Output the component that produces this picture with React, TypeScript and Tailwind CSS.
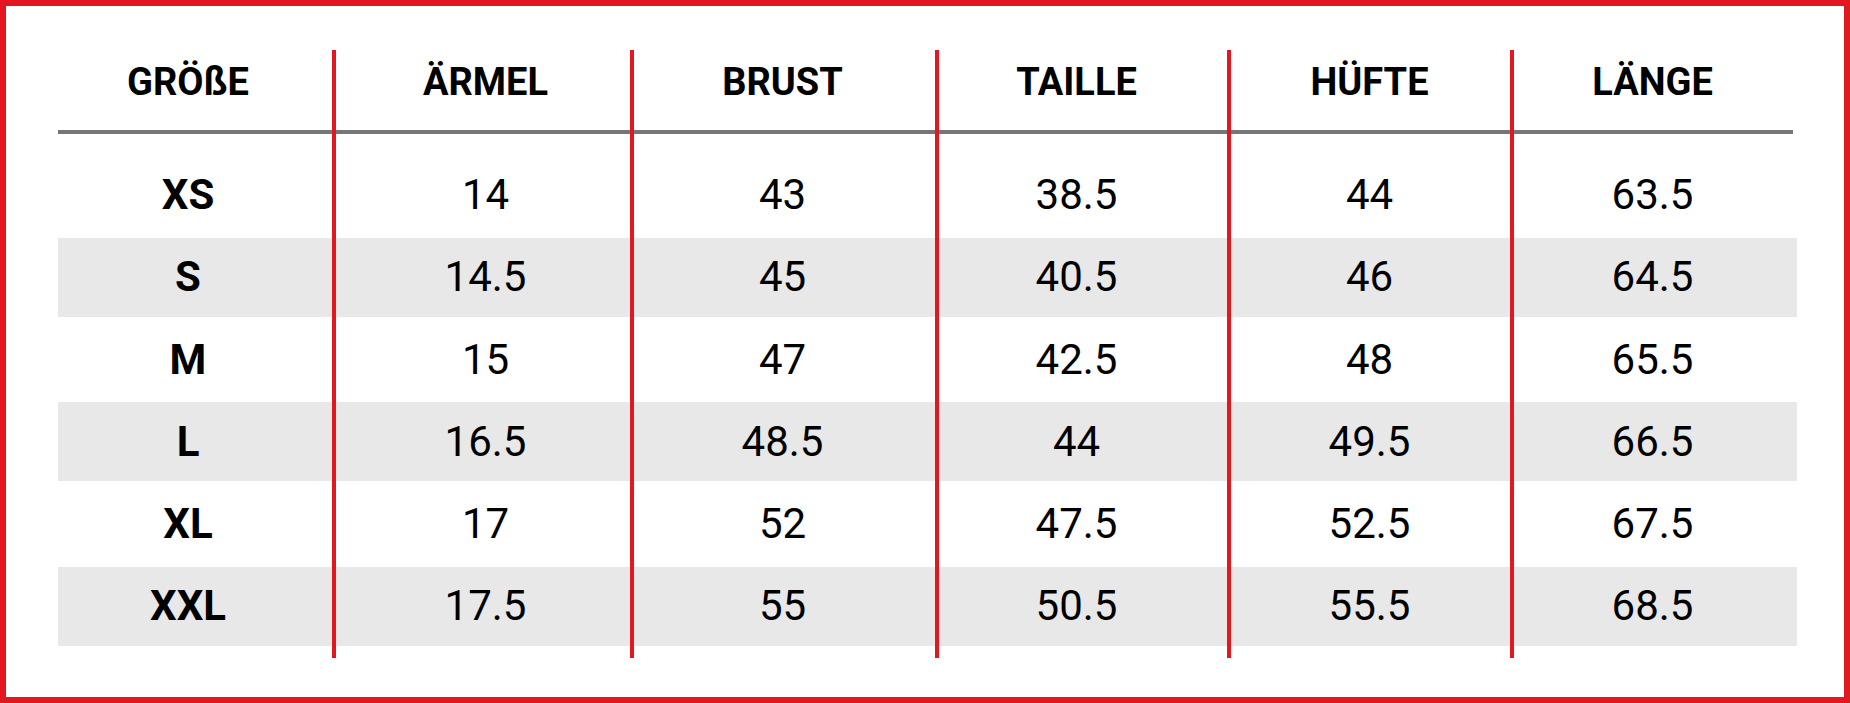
import React from "react";

type Col = { title: string; width: string; shift: string; values: string[]; bold?: boolean; extend?: boolean };

const cols: Col[] = [
  { title: "GRÖßE", width: "w-[274px]", shift: "pr-[14px]", values: ["XS", "S", "M", "L", "XL", "XXL"], bold: true },
  { title: "ÄRMEL", width: "w-[294px]", shift: "pl-[5px]", values: ["14", "14.5", "15", "16.5", "17", "17.5"] },
  { title: "BRUST", width: "w-[301px]", shift: "pr-[4px]", values: ["43", "45", "47", "48.5", "52", "55"] },
  { title: "TAILLE", width: "w-[288px]", shift: "pr-[13px]", values: ["38.5", "40.5", "42.5", "44", "47.5", "50.5"] },
  { title: "HÜFTE", width: "w-[279px]", shift: "pr-[2px]", values: ["44", "46", "48", "49.5", "52.5", "55.5"] },
  { title: "LÄNGE", width: "w-[279px]", shift: "pr-[2px]", values: ["63.5", "64.5", "65.5", "66.5", "67.5", "68.5"], extend: true },
];

function Column({ col }: { col: Col }) {
  return (
    <div className={`${col.width} flex flex-col shrink-0`}>
      <div className={`h-[80px] flex items-center justify-center pb-[17px] ${col.shift}`}>
        <span className="text-[38px] font-bold leading-none text-black">{col.title}</span>
      </div>
      <div className="h-[4px] bg-[#767676]" />
      <div className="h-[18.25px]" />
      {col.values.map((v, i) => (
        <div
          key={i}
          className={`${
            i % 2 === 1
              ? "h-[79px] bg-[#e8e8e8] flex items-center justify-center"
              : "h-[85.5px] bg-white flex items-center justify-center"
          } ${col.extend ? "mr-[-4px] pr-[6px]" : col.shift}`}
        >
          <span
            className={
              col.bold
                ? "text-[42px] font-bold leading-none text-black"
                : "text-[42px] font-normal leading-none text-black"
            }
          >
            {v}
          </span>
        </div>
      ))}
      <div className="flex-1" />
    </div>
  );
}

export default function App() {
  return (
    <div className="w-[1850px] h-[703px] box-border border-[6px] border-[#e3171f] bg-white pl-[52px] pt-[44px] font-[Roboto,sans-serif]">
      <div className="flex h-[608px]">
        {cols.map((c, i) => (
          <React.Fragment key={c.title}>
            {i > 0 && <div className="w-[4px] h-full bg-[#e3171f] shrink-0" />}
            <Column col={c} />
          </React.Fragment>
        ))}
      </div>
    </div>
  );
}
